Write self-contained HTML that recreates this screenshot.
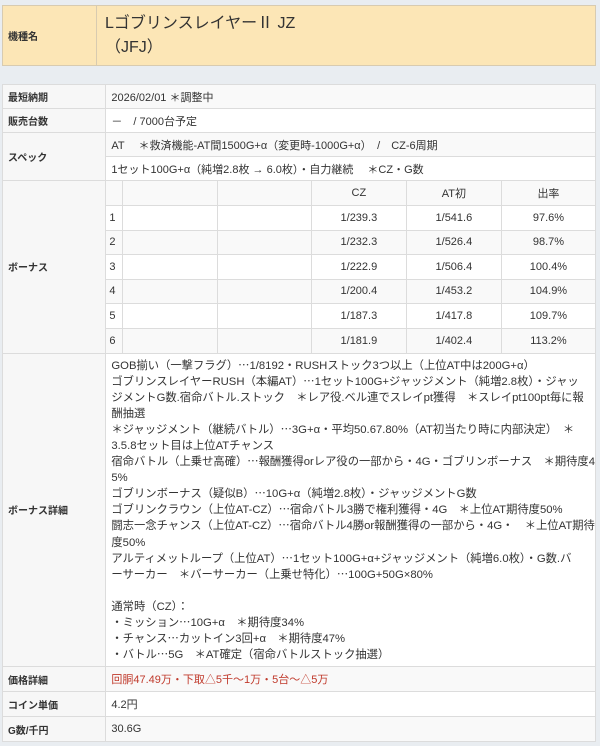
<!DOCTYPE html>
<html><head><meta charset="utf-8"><style>
*{box-sizing:border-box;margin:0;padding:0}
body{width:600px;height:746px;background:#e9edf1;font-family:"Liberation Sans","Noto Sans CJK JP",sans-serif;color:#333;position:relative;overflow:hidden}
table{border-collapse:collapse;position:absolute;left:2px;width:594px;background:#fff}
td{border:1px solid #dcdcdc;font-size:11px;vertical-align:middle}
.l{font-weight:bold;font-size:10px;background:#f7f7f7;padding-left:5px;width:105px}
.v{padding-left:5px}
.g{background:#f9f9f9}
#top{top:5px;height:61px;border:1px solid #c8c8c8}
#top td{background:#fce6b6;border-color:#d8cbb0}
#top .l{width:94px;background:#fce6b6}
.title{font-size:16px;line-height:24px;padding-left:8px;color:#333}
#main{top:84px;border:1px solid #c8c8c8}
#main tr.r td{height:24px}
.in{width:100%;border:none;position:static}
.in td{height:24.5px;text-align:center;border-top:none;border-left:none}
.in tr td:last-child{border-right:none}
.in tr:last-child td{border-bottom:none}
.in td.n{text-align:left;padding-left:3px;width:16px}
.det{padding:4px 0 3px 5px;line-height:16.1px;font-size:11.3px;white-space:nowrap;overflow:hidden}
.red{color:#c0392b}
</style></head><body>
<table id="top"><tr><td class="l">機種名</td><td class="title">LゴブリンスレイヤーⅡ JZ<br>（JFJ）</td></tr></table>
<table id="main">
<tr class="r"><td class="l">最短納期</td><td class="v g">2026/02/01 ＊調整中</td></tr>
<tr class="r"><td class="l">販売台数</td><td class="v">－　/ 7000台予定</td></tr>
<tr class="r"><td class="l" rowspan="2">スペック</td><td class="v g">AT　 ＊救済機能-AT間1500G+α（変更時-1000G+α）　/　CZ-6周期</td></tr>
<tr class="r"><td class="v">1セット100G+α（純増2.8枚 → 6.0枚）・自力継続　 ＊CZ・G数</td></tr>
<tr><td class="l">ボーナス</td><td style="padding:0">
<table class="in">
<tr class="g"><td class="n"></td><td style="width:95px"></td><td style="width:94px"></td><td style="width:95px">CZ</td><td style="width:95px">AT初</td><td>出率</td></tr>
<tr><td class="n">1</td><td></td><td></td><td>1/239.3</td><td>1/541.6</td><td>97.6%</td></tr>
<tr class="g"><td class="n">2</td><td></td><td></td><td>1/232.3</td><td>1/526.4</td><td>98.7%</td></tr>
<tr><td class="n">3</td><td></td><td></td><td>1/222.9</td><td>1/506.4</td><td>100.4%</td></tr>
<tr class="g"><td class="n">4</td><td></td><td></td><td>1/200.4</td><td>1/453.2</td><td>104.9%</td></tr>
<tr><td class="n">5</td><td></td><td></td><td>1/187.3</td><td>1/417.8</td><td>109.7%</td></tr>
<tr class="g"><td class="n">6</td><td></td><td></td><td>1/181.9</td><td>1/402.4</td><td>113.2%</td></tr>
</table></td></tr>
<tr><td class="l">ボーナス詳細</td><td class="det">GOB揃い（一撃フラグ）⋯1/8192・RUSHストック3つ以上（上位AT中は200G+α）<br>ゴブリンスレイヤーRUSH（本編AT）⋯1セット100G+ジャッジメント（純増2.8枚）・ジャッ<br>ジメントG数.宿命バトル.ストック　＊レア役.ベル連でスレイpt獲得　＊スレイpt100pt毎に報<br>酬抽選<br>＊ジャッジメント（継続バトル）⋯3G+α・平均50.67.80%（AT初当たり時に内部決定）　＊<br>3.5.8セット目は上位ATチャンス<br>宿命バトル（上乗せ高確）⋯報酬獲得orレア役の一部から・4G・ゴブリンボーナス　＊期待度4<br>5%<br>ゴブリンボーナス（疑似B）⋯10G+α（純増2.8枚）・ジャッジメントG数<br>ゴブリンクラウン（上位AT-CZ）⋯宿命バトル3勝で権利獲得・4G　＊上位AT期待度50%<br>闘志一念チャンス（上位AT-CZ）⋯宿命バトル4勝or報酬獲得の一部から・4G・　＊上位AT期待<br>度50%<br>アルティメットループ（上位AT）⋯1セット100G+α+ジャッジメント（純増6.0枚）・G数.バ<br>ーサーカー　＊バーサーカー（上乗せ特化）⋯100G+50G×80%<br><br>通常時（CZ）：<br>・ミッション⋯10G+α　＊期待度34%<br>・チャンス⋯カットイン3回+α　＊期待度47%<br>・バトル⋯5G　＊AT確定（宿命バトルストック抽選）</td></tr>
<tr class="r"><td class="l">価格詳細</td><td class="v g red" style="height:25px">回胴47.49万・下取△5千～1万・5台～△5万</td></tr>
<tr class="r"><td class="l">コイン単価</td><td class="v" style="height:25px">4.2円</td></tr>
<tr class="r"><td class="l">G数/千円</td><td class="v g" style="height:25px">30.6G</td></tr>
</table>
</body></html>
